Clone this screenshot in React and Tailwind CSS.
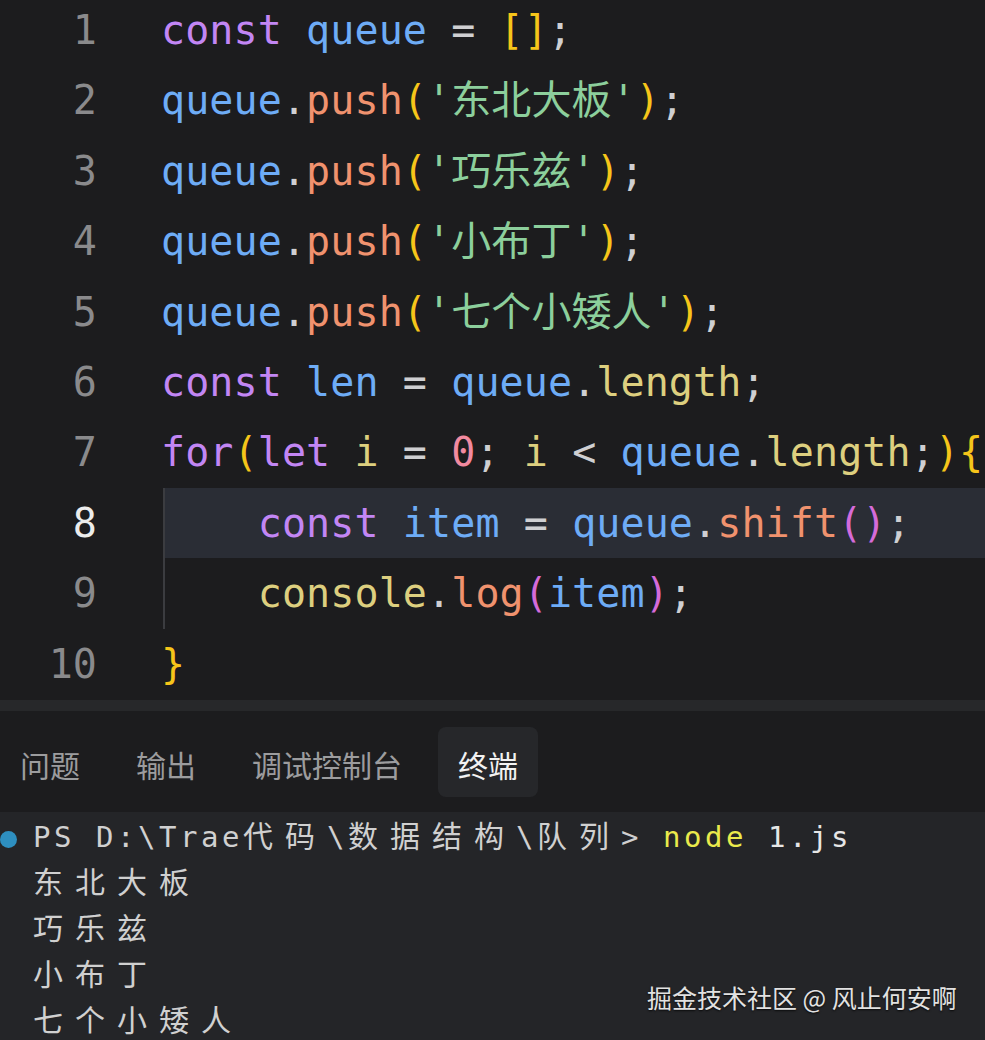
import React from "react";

const C = {
  kw: "text-[#c286f4]",
  v: "text-[#6eacf6]",
  fn: "text-[#f0926e]",
  y: "text-[#f6c51a]",
  s: "text-[#8ccf9c]",
  op: "text-[#cfcfd2]",
  p: "text-[#ddcf7f]",
  n: "text-[#f28aa0]",
  m: "text-[#d56bd9]",
};

const lines = [
  [["kw", "const"], ["op", " "], ["v", "queue"], ["op", " = "], ["y", "[]"], ["op", ";"]],
  [["v", "queue"], ["op", "."], ["fn", "push"], ["y", "("], ["s", "'东北大板'"], ["y", ")"], ["op", ";"]],
  [["v", "queue"], ["op", "."], ["fn", "push"], ["y", "("], ["s", "'巧乐兹'"], ["y", ")"], ["op", ";"]],
  [["v", "queue"], ["op", "."], ["fn", "push"], ["y", "("], ["s", "'小布丁'"], ["y", ")"], ["op", ";"]],
  [["v", "queue"], ["op", "."], ["fn", "push"], ["y", "("], ["s", "'七个小矮人'"], ["y", ")"], ["op", ";"]],
  [["kw", "const"], ["op", " "], ["v", "len"], ["op", " = "], ["v", "queue"], ["op", "."], ["p", "length"], ["op", ";"]],
  [
    ["kw", "for"], ["y", "("], ["kw", "let"], ["op", " "], ["p", "i"], ["op", " = "], ["n", "0"], ["op", "; "],
    ["p", "i"], ["op", " < "], ["v", "queue"], ["op", "."], ["p", "length"], ["op", ";"], ["y", ")"], ["y", "{"],
  ],
  [["op", "    "], ["kw", "const"], ["op", " "], ["v", "item"], ["op", " = "], ["v", "queue"], ["op", "."], ["fn", "shift"], ["m", "()"], ["op", ";"]],
  [["op", "    "], ["p", "console"], ["op", "."], ["fn", "log"], ["m", "("], ["v", "item"], ["m", ")"], ["op", ";"]],
  [["y", "}"]],
];

const isWide = (ch) => /[\u2E80-\u9FFF\uFF00-\uFFEF]/.test(ch);

function Cells({ text, className }) {
  return (
    <>
      {Array.from(text).map((ch, i) =>
        isWide(ch) ? (
          <span key={i} className={"inline-block w-[42px] text-[30px] " + className}>
            {ch}
          </span>
        ) : (
          <span key={i} className={"inline-block w-[21px] whitespace-pre text-[29px] " + className}>
            {ch}
          </span>
        )
      )}
    </>
  );
}

export default function App() {
  return (
    <div className="relative w-[985px] h-[1040px] overflow-hidden bg-[#1c1c1e] flex flex-col">
      {/* Editor */}
      <div
        className="h-[700px] shrink-0 overflow-hidden flex flex-col text-[40px] leading-[70.4px] tracking-[0.1px]"
        style={{ fontFamily: '"DejaVu Sans Mono", "Noto Sans CJK SC", monospace' }}
      >
        <div className="-mt-[5px] flex flex-col">
          {lines.map((toks, i) => {
            const n = i + 1;
            const active = n === 8;
            const guide = n === 8 || n === 9;
            return (
              <div key={i} className="flex h-[70.4px] shrink-0">
                <div className={"w-[97px] shrink-0 text-right " + (active ? "text-[#ececec]" : "text-[#8a8a8c]")}>
                  {n}
                </div>
                <div className="w-[66px] shrink-0" />
                <div
                  className={
                    "flex-1 whitespace-pre " +
                    (active ? "bg-[#2a2d35] " : "") +
                    (guide ? "shadow-[inset_2px_0_0_#3b3c40]" : "")
                  }
                >
                  <span className="-ml-[2px]">
                    {toks.map(([c, t], j) => (
                      <span key={j} className={C[c]}>
                        {t}
                      </span>
                    ))}
                  </span>
                </div>
              </div>
            );
          })}
        </div>
      </div>

      {/* Separator */}
      <div className="h-[11px] shrink-0 bg-[#27282a]" />

      {/* Tabs */}
      <div
        className="h-[101px] shrink-0 flex items-center gap-4 text-[30px] bg-[#1c1c1e]"
        style={{ fontFamily: '"Noto Sans CJK SC", sans-serif' }}
      >
        <div className="px-5 pt-[5px] h-[70px] flex items-center text-[#9c9c9e]">问题</div>
        <div className="px-5 pt-[5px] h-[70px] flex items-center text-[#9c9c9e]">输出</div>
        <div className="px-5 pt-[5px] h-[70px] flex items-center text-[#9c9c9e]">调试控制台</div>
        <div className="px-5 pt-[5px] h-[70px] flex items-center rounded-lg bg-[#26272a] text-[#f2f2f2]">终端</div>
      </div>

      {/* Terminal */}
      <div
        className="flex-1 bg-[#242528] pt-[4px] leading-[46px] text-[#d0d0d0]"
        style={{ fontFamily: '"DejaVu Sans Mono", "Noto Sans CJK SC", monospace' }}
      >
        <div className="flex items-center h-[46.2px]">
          <div className="w-[33px] shrink-0 flex items-center">
            <span className="block w-[17px] h-[17px] rounded-full bg-[#2e8fc0]" />
          </div>
          <div className="whitespace-nowrap">
            <Cells text="PS D:\Trae代码\数据结构\队列> " className="" />
            <Cells text="node" className="text-[#eaea4c]" />
            <Cells text=" 1.js" className="text-[#e6e6e6]" />
          </div>
        </div>
        {["东北大板", "巧乐兹", "小布丁", "七个小矮人"].map((t, i) => (
          <div key={i} className="flex items-center h-[46.2px]">
            <div className="w-[33px] shrink-0" />
            <div className="whitespace-nowrap">
              <Cells text={t} className="" />
            </div>
          </div>
        ))}
      </div>

      {/* Watermark */}
      <div
        className="absolute left-[647px] top-[981px] text-[25px] leading-[32px] text-[#e2e2e2] [text-shadow:0_1px_2px_rgba(0,0,0,0.8)] whitespace-nowrap"
        style={{ fontFamily: '"Noto Sans CJK SC", sans-serif' }}
      >
        掘金技术社区 @ 风止何安啊
      </div>
    </div>
  );
}
